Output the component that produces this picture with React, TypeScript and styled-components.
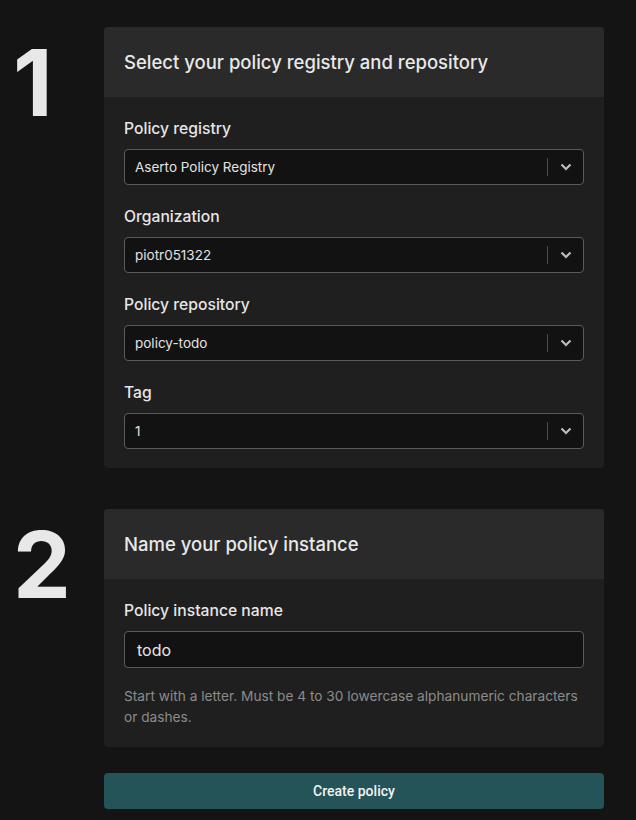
import React from 'react';
import styled, {createGlobalStyle} from 'styled-components';

const GlobalStyle = createGlobalStyle`
  body {
    margin: 0;
    background: #141414;
    font-family: Inter, "Noto Sans", sans-serif;
    color: #e6e6e6;
  }
`

const Page = styled.div`
  display: flex;
  flex-direction: column;
  gap: 41px;
  padding: 27px 32px 11px 0;
`

const Step = styled.section`
  display: grid;
  grid-template-columns: 104px 500px;
`

const StepNumber = styled.div`
  font-size: 92px;
  font-weight: 700;
  line-height: 1;
  color: #e8e8e8;
  padding: 10px 0 0 13px;
`

const Card = styled.div`
  background: #1f1f1f;
  border-radius: 4px;
  overflow: hidden;
`

const CardHeader = styled.h2`
  margin: 0;
  height: 70px;
  display: flex;
  align-items: center;
  padding: 0 20px;
  background: #2a2a2a;
  font-size: 18.5px;
  font-weight: 500;
  color: #e8e8e8;
`

const CardBody = styled.div`
  display: flex;
  flex-direction: column;
  gap: 22px;
  padding: 22px 20px 19px;
`

const Field = styled.div`
  display: flex;
  flex-direction: column;
  gap: 10px;
`

const Label = styled.label`
  font-size: 15.7px;
  font-weight: 500;
  line-height: 20px;
  color: #e6e6e6;
`

const SelectBox = styled.div`
  display: flex;
  align-items: center;
  height: 36px;
  box-sizing: border-box;
  border: 1px solid #5a5a5a;
  border-radius: 4px;
  background: #121212;
`

const SelectValue = styled.span`
  flex: 1;
  padding-left: 10px;
  font-size: 13.5px;
  color: #e2e2e2;
`

const Separator = styled.span`
  width: 1px;
  height: 18px;
  background: #4a4a4a;
`

const Chevron = styled.span`
  width: 35px;
  display: flex;
  justify-content: center;
  color: #bdbdbd;
`

const TextInput = styled.div`
  height: 37px;
  box-sizing: border-box;
  display: flex;
  align-items: center;
  padding-left: 12px;
  border: 1px solid #5a5a5a;
  border-radius: 4px;
  background: #121212;
  font-size: 16px;
  color: #e6e6e6;
`

const Help = styled.p`
  margin: 8px 0 0;
  font-size: 13.7px;
  line-height: 21px;
  color: #8c8c8c;
`

const Actions = styled.div`
  display: grid;
  grid-template-columns: 104px 500px;
  margin-top: -15px;
`

const CreateButton = styled.button`
  grid-column: 2;
  height: 36px;
  border: none;
  border-radius: 4px;
  background: #245457;
  color: #f2f2f2;
  font-family: Roboto, "Liberation Sans", sans-serif;
  font-size: 14px;
  font-weight: 500;
`

function ChevronIcon() {
  return (
    <svg width="12" height="8" viewBox="0 0 12 8">
      <path d="M1.5 1.5 L6 6 L10.5 1.5" fill="none" stroke="currentColor" strokeWidth="2.2" />
    </svg>
  )
}

function Select({label, value}: {label: string; value: string}) {
  return (
    <Field>
      <Label>{label}</Label>
      <SelectBox>
        <SelectValue>{value}</SelectValue>
        <Separator />
        <Chevron><ChevronIcon /></Chevron>
      </SelectBox>
    </Field>
  )
}

const selects = [
  ["Policy registry", "Aserto Policy Registry"],
  ["Organization", "piotr051322"],
  ["Policy repository", "policy-todo"],
  ["Tag", "1"],
]

export default function App() {
  return (
    <Page>
      <GlobalStyle />
      <Step>
        <StepNumber>1</StepNumber>
        <Card>
          <CardHeader>Select your policy registry and repository</CardHeader>
          <CardBody>
            {selects.map(([label, value]) => <Select key={label} label={label} value={value} />)}
          </CardBody>
        </Card>
      </Step>
      <Step>
        <StepNumber>2</StepNumber>
        <Card>
          <CardHeader>Name your policy instance</CardHeader>
          <CardBody>
            <Field>
              <Label>Policy instance name</Label>
              <TextInput>todo</TextInput>
              <Help>Start with a letter. Must be 4 to 30 lowercase alphanumeric characters or dashes.</Help>
            </Field>
          </CardBody>
        </Card>
      </Step>
      <Actions>
        <CreateButton>Create policy</CreateButton>
      </Actions>
    </Page>
  )
}
